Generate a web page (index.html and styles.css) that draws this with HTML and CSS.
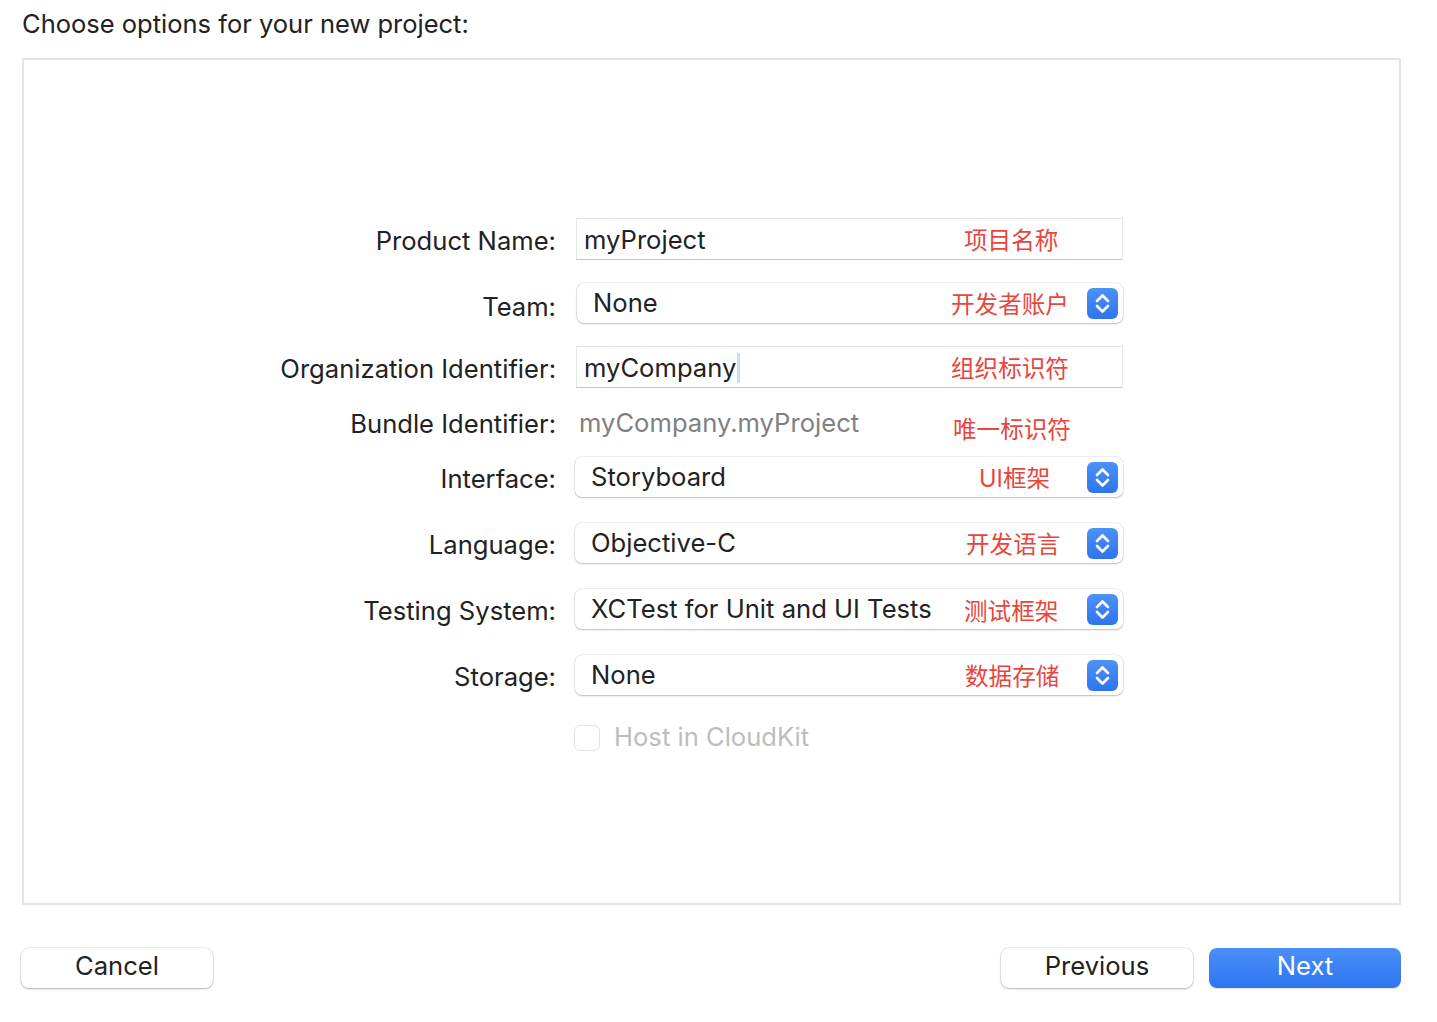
FILE: index.html
```html
<!DOCTYPE html>
<html lang="en">
<head>
<meta charset="utf-8">
<title>Choose options for your new project</title>
<link rel="stylesheet" href="styles.css">
</head>
<body>
<div class="sheet">
  <h1 class="title">Choose options for your new project:</h1>
  <div class="panel">
    <div class="form">
      <div class="row r1">
        <div class="label">Product Name:</div>
        <div class="ctl">
          <div class="field"><span class="val">myProject</span></div>
          <span class="note n1">项目名称</span>
        </div>
      </div>
      <div class="row r2">
        <div class="label lower">Team:</div>
        <div class="ctl">
          <div class="popup"><span class="val">None</span><span class="stepper"><svg viewBox="0 0 31 31" width="31" height="31"><path d="M10 13 L15.5 7.5 L21 13 M10 18 L15.5 23.5 L21 18" fill="none" stroke="#fff" stroke-width="2.6" stroke-linecap="round" stroke-linejoin="round"/></svg></span></div>
          <span class="note n2">开发者账户</span>
        </div>
      </div>
      <div class="row r3">
        <div class="label">Organization Identifier:</div>
        <div class="ctl">
          <div class="field"><span class="val">myCompany</span><span class="caret"></span></div>
          <span class="note n3">组织标识符</span>
        </div>
      </div>
      <div class="row r4">
        <div class="label">Bundle Identifier:</div>
        <div class="ctl">
          <div class="static">myCompany.myProject</div>
          <span class="note n4">唯一标识符</span>
        </div>
      </div>
      <div class="row r5">
        <div class="label">Interface:</div>
        <div class="ctl">
          <div class="popup wide"><span class="val">Storyboard</span><span class="stepper"><svg viewBox="0 0 31 31" width="31" height="31"><path d="M10 13 L15.5 7.5 L21 13 M10 18 L15.5 23.5 L21 18" fill="none" stroke="#fff" stroke-width="2.6" stroke-linecap="round" stroke-linejoin="round"/></svg></span></div>
          <span class="note n5">UI框架</span>
        </div>
      </div>
      <div class="row r6">
        <div class="label">Language:</div>
        <div class="ctl">
          <div class="popup wide"><span class="val">Objective-C</span><span class="stepper"><svg viewBox="0 0 31 31" width="31" height="31"><path d="M10 13 L15.5 7.5 L21 13 M10 18 L15.5 23.5 L21 18" fill="none" stroke="#fff" stroke-width="2.6" stroke-linecap="round" stroke-linejoin="round"/></svg></span></div>
          <span class="note n6">开发语言</span>
        </div>
      </div>
      <div class="row r7">
        <div class="label">Testing System:</div>
        <div class="ctl">
          <div class="popup wide"><span class="val">XCTest for Unit and UI Tests</span><span class="stepper"><svg viewBox="0 0 31 31" width="31" height="31"><path d="M10 13 L15.5 7.5 L21 13 M10 18 L15.5 23.5 L21 18" fill="none" stroke="#fff" stroke-width="2.6" stroke-linecap="round" stroke-linejoin="round"/></svg></span></div>
          <span class="note n7">测试框架</span>
        </div>
      </div>
      <div class="row r8">
        <div class="label">Storage:</div>
        <div class="ctl">
          <div class="popup wide"><span class="val">None</span><span class="stepper"><svg viewBox="0 0 31 31" width="31" height="31"><path d="M10 13 L15.5 7.5 L21 13 M10 18 L15.5 23.5 L21 18" fill="none" stroke="#fff" stroke-width="2.6" stroke-linecap="round" stroke-linejoin="round"/></svg></span></div>
          <span class="note n8">数据存储</span>
        </div>
      </div>
      <div class="row r9">
        <div class="label"></div>
        <div class="ctl check">
          <span class="box"></span><span class="check-label">Host in CloudKit</span>
        </div>
      </div>
    </div>
  </div>
  <div class="buttons">
    <button class="btn">Cancel</button>
    <div class="spacer"></div>
    <button class="btn">Previous</button>
    <button class="btn primary">Next</button>
  </div>
</div>
</body>
</html>
```

FILE: styles.css
```css
* { box-sizing: border-box; }
html, body { margin: 0; padding: 0; background: #ffffff; }
body {
  font-family: Inter, "Noto Sans CJK SC", "Liberation Sans", sans-serif;
  color: #222222;
  width: 1437px;
  height: 1022px;
  overflow: hidden;
}
.sheet { padding: 0 0 0 22px; width: 1437px; }
.title {
  margin: 0;
  height: 58px;
  padding-top: 8px;
  font-size: 25.5px;
  font-weight: 400;
  line-height: 32px;
  color: #222;
}
.panel {
  width: 1379px;
  height: 847px;
  border: 2px solid #e4e4e4;
  padding-top: 158px;
}
.form { display: flex; flex-direction: column; }
.row {
  display: grid;
  grid-template-columns: 532px 547px;
  column-gap: 20px;
  align-items: center;
}
.r1 { height: 42px; }
.r2 { height: 40px; margin-top: 23px; }
.r3 { height: 42px; margin-top: 23px; }
.r4 { height: 40px; margin-top: 14px; }
.r5 { height: 40px; margin-top: 15px; }
.r6 { height: 40px; margin-top: 26px; }
.r7 { height: 40px; margin-top: 26px; }
.r8 { height: 40px; margin-top: 26px; }
.r9 { height: 26px; margin-top: 29px; }
.label {
  text-align: right;
  font-size: 25.6px;
  color: #222;
  line-height: 30px;
  padding-top: 3px;
}
.label.lower { padding-top: 8px; }
.ctl { position: relative; height: 100%; }
.field {
  height: 100%;
  border: 1px solid #e6e6e6;
  border-bottom: 1.5px solid #c6c6c6;
  background: #fff;
  display: flex;
  align-items: center;
  padding-left: 7px;
  padding-top: 1px;
  font-size: 25.6px;
  color: #222;
}
.caret {
  display: inline-block;
  width: 3px;
  height: 30px;
  background: #c9dcf8;
  margin-left: 1px;
}
.popup {
  height: 40px;
  margin-left: 1px;
  border-radius: 7px;
  background: #fff;
  box-shadow: 0 0 0 0.5px rgba(0,0,0,0.12), 0 1px 2px rgba(0,0,0,0.22);
  display: flex;
  align-items: center;
  padding-left: 16px;
  padding-right: 5px;
  font-size: 25.6px;
  color: #222;
}
.popup.wide { margin-left: -1px; padding-left: 16px; }
.popup .val { flex: 1; margin-top: -2px; }
.stepper {
  width: 31px;
  height: 31px;
  border-radius: 6px;
  background: linear-gradient(#4d92f8, #2e74ef);
  display: flex;
}
.static {
  height: 100%;
  display: flex;
  align-items: center;
  padding-left: 3px;
  font-size: 25.6px;
  color: #808080;
}
.note {
  position: absolute;
  top: 50%;
  transform: translateY(-50%);
  font-family: "Noto Sans CJK SC", sans-serif;
  font-size: 23.6px;
  color: #e8463b;
  white-space: nowrap;
}
.n1 { left: 388px; }
.n2 { left: 375px; }
.n3 { left: 375px; }
.n4 { left: 377px; margin-top: 6px; }
.n5 { left: 403px; font-family: Inter, "Noto Sans CJK SC", sans-serif; }
.n6 { left: 390px; }
.n7 { left: 388px; margin-top: 1px; }
.n8 { left: 389px; }
.check { display: flex; align-items: center; }
.box {
  width: 26px;
  height: 26px;
  margin-left: -2px;
  border: 1px solid #e2e2e2;
  border-radius: 6px;
  background: #fff;
}
.check-label {
  margin-left: 14px;
  margin-top: -3px;
  font-size: 25.6px;
  color: #bdbdbd;
}
.buttons {
  display: flex;
  align-items: center;
  margin-top: 43px;
  width: 1380px;
  margin-left: -1px;
}
.spacer { flex: 1; }
.btn {
  width: 192px;
  height: 40px;
  border: none;
  border-radius: 8px;
  background: #fff;
  box-shadow: 0 0 0 0.5px rgba(0,0,0,0.14), 0 1px 2px rgba(0,0,0,0.25);
  font-family: Inter, "Liberation Sans", sans-serif;
  font-size: 25.6px;
  color: #222;
  padding: 0 0 5px;
}
.btn + .btn { margin-left: 16px; }
.btn.primary {
  background: linear-gradient(#4a8ff8, #2f75ef);
  color: #fff;
  box-shadow: 0 1px 1px rgba(0,0,0,0.12);
}
```
